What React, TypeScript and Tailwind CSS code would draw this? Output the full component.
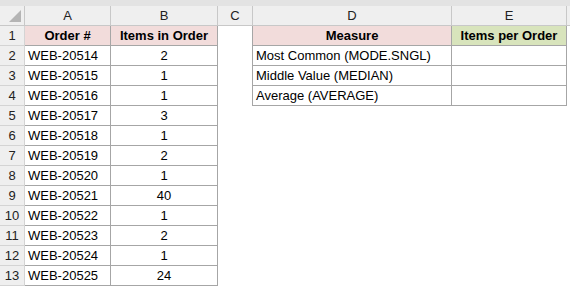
const ORDERS: [string, number][] = [
  ['WEB-20514', 2],
  ['WEB-20515', 1],
  ['WEB-20516', 1],
  ['WEB-20517', 3],
  ['WEB-20518', 1],
  ['WEB-20519', 2],
  ['WEB-20520', 1],
  ['WEB-20521', 40],
  ['WEB-20522', 1],
  ['WEB-20523', 2],
  ['WEB-20524', 1],
  ['WEB-20525', 24],
];

const MEASURES = ['Most Common (MODE.SNGL)', 'Middle Value (MEDIAN)', 'Average (AVERAGE)'];

const COLS = [
  { key: 'A', w: 'w-[86px]' },
  { key: 'B', w: 'w-[107px]' },
  { key: 'C', w: 'w-[35px]' },
  { key: 'D', w: 'w-[199px]' },
  { key: 'E', w: 'w-[115px]' },
];

function RowNum({ n }: { n: number }) {
  return (
    <div className="w-[25px] shrink-0 h-full flex items-center justify-center bg-[#efefef] border-r border-b border-[#d4d4d4] text-[#222]">
      {n}
    </div>
  );
}

export default function App() {
  return (
    <div
      className="w-[570px] h-[288px] overflow-hidden bg-white text-[13px] text-black leading-none"
      style={{ fontFamily: '"Liberation Sans", Arial, sans-serif' }}
    >
      <div className="h-[6px] bg-[#e3e3e3]" />
      {/* column letters */}
      <div className="flex h-[20px] bg-[#efefef]">
        <div className="w-[25px] shrink-0 border-r border-b border-[#c8c8c8] relative">
          <svg className="absolute right-[3px] bottom-[3px]" width="12" height="12" viewBox="0 0 12 12">
            <polygon points="12,0 12,12 0,12" fill="#b4b4b4" />
          </svg>
        </div>
        {COLS.map(c => (
          <div key={c.key} className={`${c.w} shrink-0 flex items-center justify-center border-r border-b border-[#c8c8c8] text-[#222]`}>
            {c.key}
          </div>
        ))}
        <div className="flex-1 border-b border-[#c8c8c8]" />
      </div>
      {/* row 1 */}
      <div className="flex h-[20px]">
        <RowNum n={1} />
        <div className="w-[86px] shrink-0 flex items-center justify-center font-bold bg-[#f2dcdb] border-r border-b border-[#a6a6a6]">Order #</div>
        <div className="w-[107px] shrink-0 flex items-center justify-center font-bold bg-[#f2dcdb] border-r border-b border-[#a6a6a6]">Items in Order</div>
        <div className="w-[35px] shrink-0 border-r border-[#a6a6a6]" />
        <div className="w-[199px] shrink-0 flex items-center justify-center font-bold bg-[#f2dcdb] border-r border-b border-[#a6a6a6]">Measure</div>
        <div className="w-[115px] shrink-0 flex items-center justify-center font-bold bg-[#d8e4bc] border-r border-b border-[#a6a6a6]">Items per Order</div>
      </div>
      {ORDERS.map(([id, qty], i) => {
        const measure = MEASURES[i];
        return (
          <div key={id} className="flex h-[20px]">
            <RowNum n={i + 2} />
            <div className="w-[86px] shrink-0 flex items-center pl-[3px] border-r border-b border-[#a6a6a6]">{id}</div>
            <div className="w-[107px] shrink-0 flex items-center justify-center border-r border-b border-[#a6a6a6]">{qty}</div>
            <div className={`w-[35px] shrink-0 ${measure ? 'border-r border-[#a6a6a6]' : ''}`} />
            {measure && (
              <>
                <div className="w-[199px] shrink-0 flex items-center pl-[3px] border-r border-b border-[#a6a6a6]">{measure}</div>
                <div className="w-[115px] shrink-0 border-r border-b border-[#a6a6a6]" />
              </>
            )}
          </div>
        );
      })}
    </div>
  );
}
